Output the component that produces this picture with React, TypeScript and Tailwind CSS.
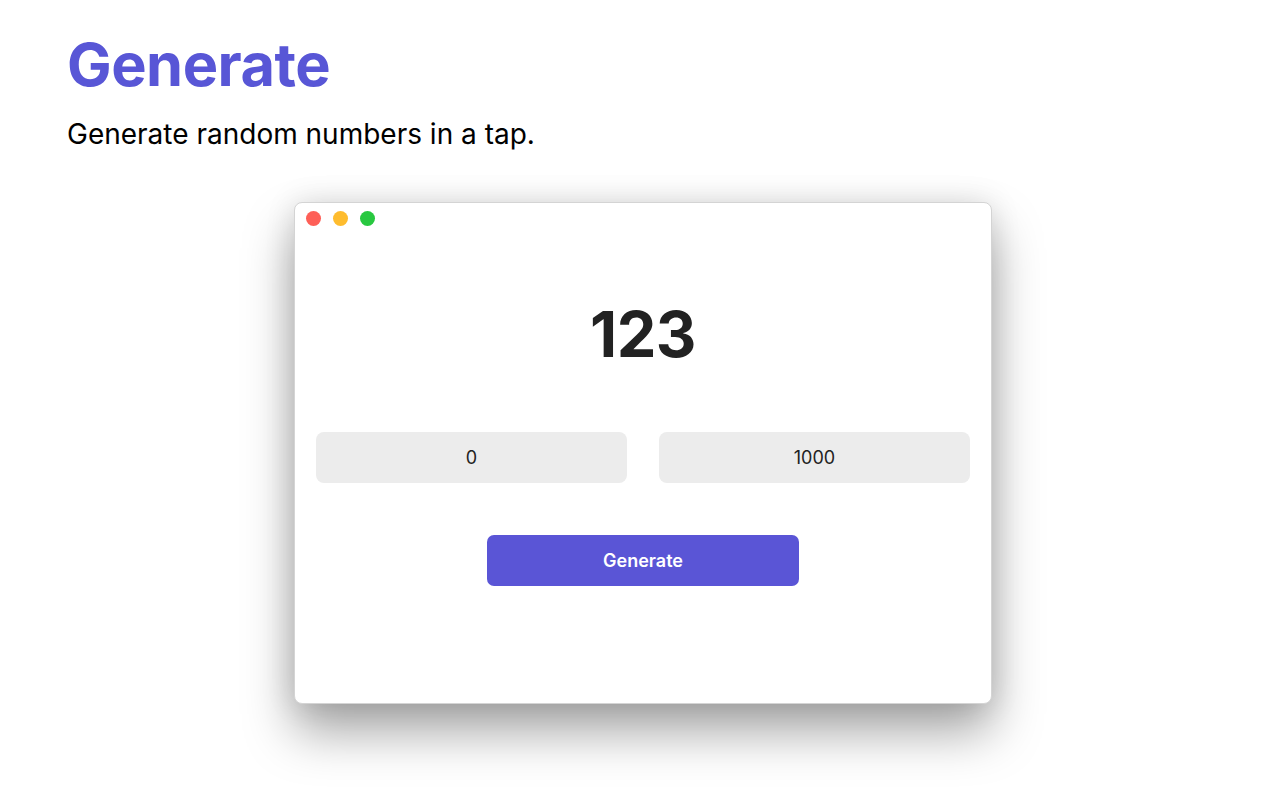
import React, { useState } from 'react'

const App = () => {
  const [min] = useState('0')
  const [max] = useState('1000')
  const [value] = useState(123)

  return (
    <div
      className="min-h-screen w-full bg-white"
      style={{ fontFamily: 'Inter, "Noto Sans", sans-serif' }}
    >
      <div className="px-[67px] pt-[35px]">
        <h1 className="text-[59.5px] font-bold leading-none tracking-[-0.5px] text-[#5856d6]">
          Generate
        </h1>
        <p className="mt-[25px] text-[28px] leading-none text-black">
          Generate random numbers in a tap.
        </p>
      </div>

      <div className="mt-[54px] flex justify-center">
        <div className="h-[502px] w-[698px] overflow-hidden rounded-[8px] border border-[#d4d4d4] bg-white shadow-[0_28px_50px_rgba(0,0,0,0.35),0_0_30px_rgba(0,0,0,0.12)]">
          {/* title bar */}
          <div className="flex items-center gap-[12px] pl-[11px] pt-[8px]">
            <span className="h-[15px] w-[15px] rounded-full bg-[#fe5f57]" />
            <span className="h-[15px] w-[15px] rounded-full bg-[#febc2e]" />
            <span className="h-[15px] w-[15px] rounded-full bg-[#28c840]" />
          </div>

          <div className="flex flex-col items-center px-[21px]">
            <div className="mt-[77px] text-[63px] font-bold leading-none tracking-[-0.5px] text-[#222222]">
              {value}
            </div>

            <div className="mt-[66px] grid w-full grid-cols-2 gap-[32px]">
              <div className="flex h-[51px] items-center justify-center rounded-[8px] bg-[#ececec] text-[18px] text-[#222222]">
                {min}
              </div>
              <div className="flex h-[51px] items-center justify-center rounded-[8px] bg-[#ececec] text-[18px] text-[#222222]">
                {max}
              </div>
            </div>

            <button className="mt-[52px] flex h-[51px] w-[312px] items-center justify-center rounded-[7px] bg-[#5a55d6] text-[18px] font-semibold text-white">
              Generate
            </button>
          </div>
        </div>
      </div>
    </div>
  )
}

export default App
